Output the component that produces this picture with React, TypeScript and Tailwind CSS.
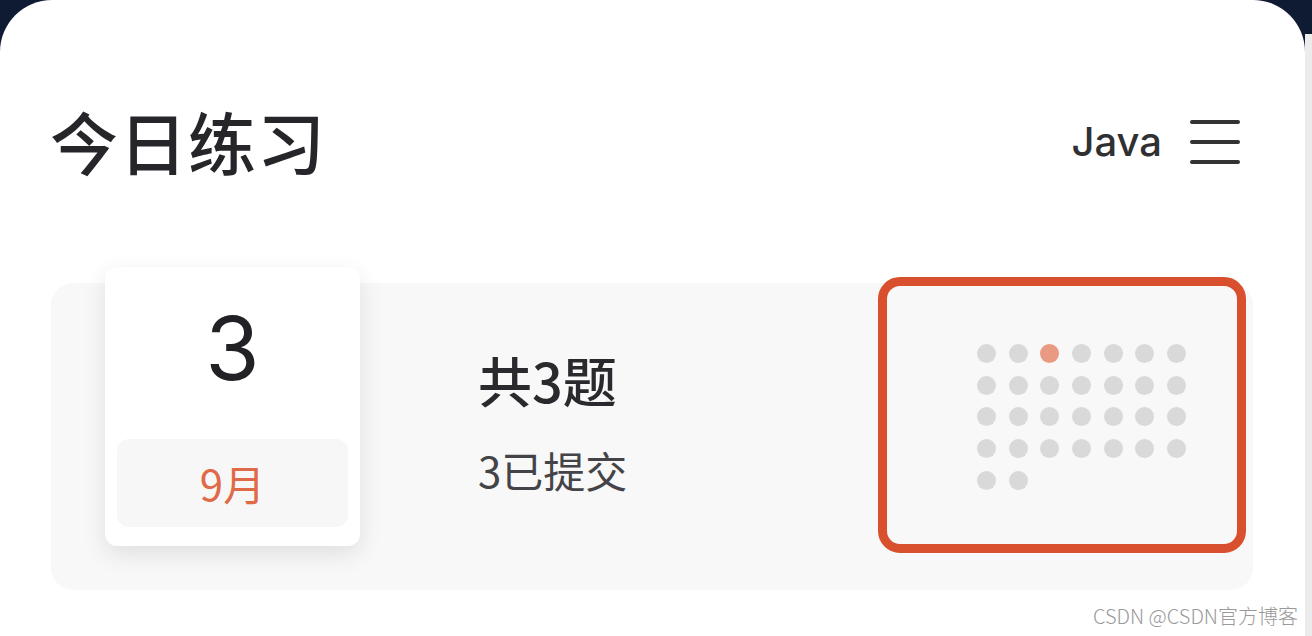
const cjk = { fontFamily: '"Noto Sans CJK SC", "Noto Sans", sans-serif' };
const latin = { fontFamily: 'Inter, "Noto Sans", sans-serif' };

const days = Array.from({ length: 30 }, (_, i) => i + 1);

export default function App() {
  return (
    <div className="relative w-[1312px] h-[636px] bg-[#0f1a33] flex overflow-hidden" style={cjk}>
      <div className="w-[1305px] h-full bg-white rounded-t-[52px] flex flex-col">
        <header className="h-[283px] shrink-0 flex items-center justify-between pl-[50px] pr-[64px]">
          <h1 className="text-[68px] leading-none font-medium text-[#26262a] tracking-[1px] -mt-[2px]">今日练习</h1>
          <div className="flex items-center gap-[27px]">
            <span className="text-[40px] font-medium text-[#303033]" style={latin}>
              Java
            </span>
            <svg width="52" height="46" viewBox="0 0 52 46" className="text-[#333336]">
              <g stroke="currentColor" strokeWidth="4" strokeLinecap="round">
                <line x1="3" y1="3" x2="49" y2="3" />
                <line x1="3" y1="23" x2="49" y2="23" />
                <line x1="3" y1="43" x2="49" y2="43" />
              </g>
            </svg>
          </div>
        </header>

        <section className="ml-[51px] w-[1202px] h-[307px] bg-[#f8f8f8] rounded-[22px] flex items-start">
          <div className="ml-[54px] -mt-[16px] w-[255px] h-[279px] bg-white rounded-[12px] shadow-[0_8px_24px_rgba(0,0,0,0.10)] flex flex-col px-[12px] pt-[12px] pb-[19px]">
            <div className="flex-1 flex items-center justify-center pb-[22px]">
              <span className="text-[88px] leading-none text-[#222226]" style={latin}>
                3
              </span>
            </div>
            <div className="h-[88px] bg-[#f7f7f7] rounded-[12px] flex items-center justify-center">
              <span className="text-[42px] leading-none text-[#e06a48]">9月</span>
            </div>
          </div>

          <div className="ml-[118px] mt-[70px] flex flex-col">
            <span className="text-[54px] leading-none font-medium text-[#2a2a2e]">共3题</span>
            <span className="mt-[42px] text-[42px] leading-none text-[#444448]">3已提交</span>
          </div>

          <div className="ml-auto mr-[7px] -mt-[6px] w-[368px] h-[276px] border-[9px] border-[#d9502f] rounded-[22px] bg-[#f8f8f8] pl-[90px] pt-[58px]">
            <div className="grid grid-cols-[repeat(7,19px)] gap-x-[12.7px] gap-y-[12.7px]">
              {days.map((d) => (
                <span
                  key={d}
                  className={d === 3 ? 'w-[19px] h-[19px] rounded-full bg-[#e89a82]' : 'w-[19px] h-[19px] rounded-full bg-[#d9d9d9]'}
                />
              ))}
            </div>
          </div>
        </section>
      </div>
      <div className="w-[7px] flex flex-col">
        <div className="h-[34px] bg-[#0f1a33]" />
        <div className="flex-1 bg-[#ececec]" />
      </div>
      <span className="absolute right-[14px] bottom-[5px] text-[20px] font-light text-[#9a9a9a]">CSDN @CSDN官方博客</span>
    </div>
  );
}
